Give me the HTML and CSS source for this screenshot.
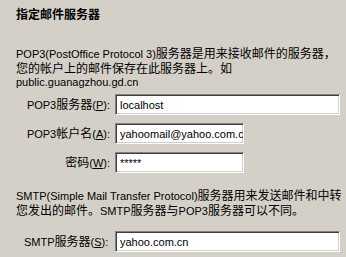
FILE: index.html
```html
<!DOCTYPE html>
<html lang="zh-CN">
<head>
<meta charset="utf-8">
<link rel="stylesheet" href="styles.css">
</head>
<body>
<div class="page">
  <h1 class="title">指定邮件服务器</h1>
  <p class="desc">POP3(PostOffice Protocol 3)<span class="zh">服务器是用来接收邮件的服务器，</span><br><span class="zh">您的帐户上的邮件保存在此服务器上。如</span><br>public.guanagzhou.gd.cn</p>
  <div class="form">
    <label class="lbl">POP3<span class="zh">服务器</span>(<u>P</u>):</label>
    <div class="field wide">localhost</div>
    <label class="lbl">POP3<span class="zh">帐户名</span>(<u>A</u>):</label>
    <div class="field narrow">yahoomail@yahoo.com.cn</div>
    <label class="lbl"><span class="zh">密码</span>(<u>W</u>):</label>
    <div class="field narrow pw">*****</div>
  </div>
  <p class="desc desc2">SMTP(Simple Mail Transfer Protocol)<span class="zh">服务器用来发送邮件和中转</span><br><span class="zh">您发出的邮件。</span>SMTP<span class="zh">服务器与</span>POP3<span class="zh">服务器可以不同。</span></p>
  <div class="smtp">
    <label class="lbl smtp-lbl">SMTP<span class="zh">服务器</span>(<u>S</u>):</label>
    <div class="field wide">yahoo.com.cn</div>
  </div>
</div>
</body>
</html>
```
FILE: styles.css
```css
html, body {
  margin: 0;
  padding: 0;
  background: #d4d0c8;
}
body {
  width: 346px;
  height: 257px;
  overflow: hidden;
  font-family: "Liberation Sans", "Noto Sans CJK SC", sans-serif;
  font-size: 11px;
  color: #000;
}
.zh {
  font-family: "Noto Sans CJK SC", sans-serif;
  font-size: 12px;
}
.page {
  padding: 7px 7px 0 16px;
}
.title {
  margin: 0;
  font-family: "Noto Sans CJK SC", sans-serif;
  font-size: 12px;
  font-weight: bold;
  line-height: 14px;
}
.desc {
  margin: 25px 0 0 0;
  line-height: 13px;
  white-space: nowrap;
}
.desc2 {
  margin-top: 15px;
}
.form {
  display: grid;
  grid-template-columns: 94px 1fr;
  column-gap: 5px;
  row-gap: 8px;
  align-items: center;
  margin-top: 5px;
}
.lbl {
  text-align: right;
  white-space: nowrap;
  line-height: 14px;
}
.field {
  box-sizing: border-box;
  height: 21px;
  background: #fff;
  border-top: 1px solid #808080;
  border-left: 1px solid #808080;
  border-bottom: 1px solid #fff;
  border-right: 1px solid #fff;
  box-shadow: inset 1px 1px 0 #404040, inset -1px -1px 0 #d4d0c8;
  padding: 3px 2px 0 4px;
  line-height: 14px;
  white-space: nowrap;
  overflow: hidden;
}
.wide {
  width: 225px;
}
.narrow {
  width: 129px;
}
.smtp {
  display: grid;
  grid-template-columns: 86px 1fr;
  column-gap: 5px;
  align-items: center;
  margin-top: 13px;
  padding-left: 8px;
}
.smtp-lbl {
  text-align: left;
}
```
